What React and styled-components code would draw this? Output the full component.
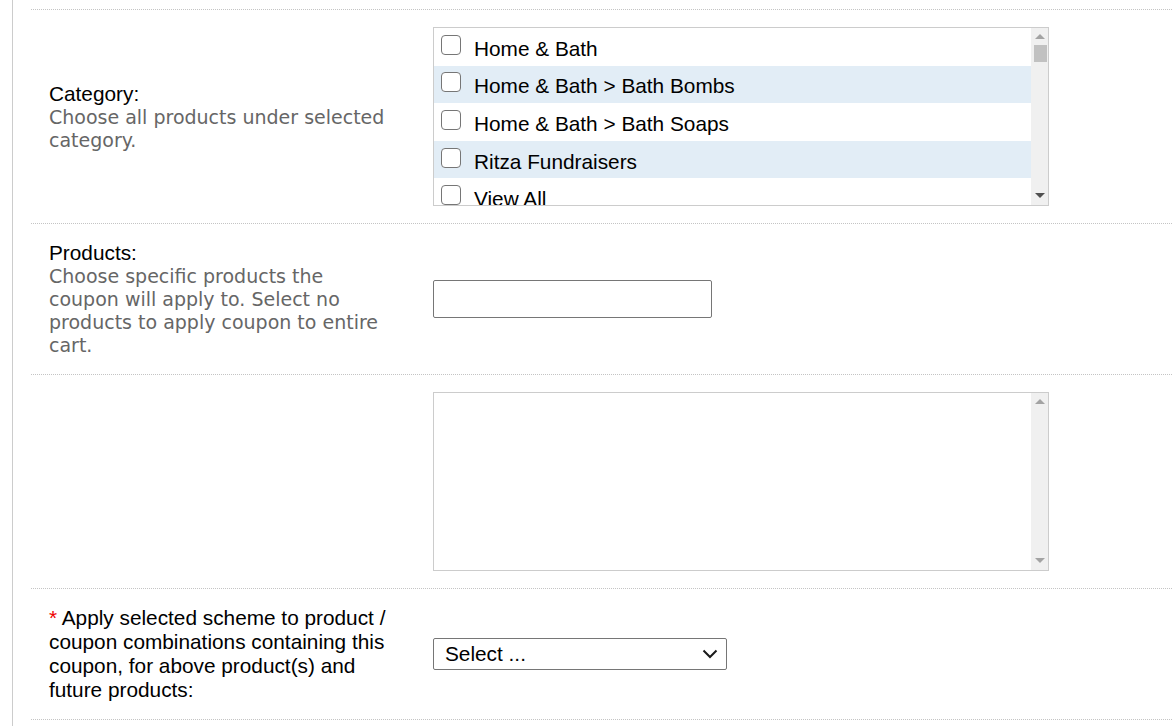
import React from "react";
import styled, { createGlobalStyle } from "styled-components";

const categories = [
  "Home & Bath",
  "Home & Bath > Bath Bombs",
  "Home & Bath > Bath Soaps",
  "Ritza Fundraisers",
  "View All",
];

const GlobalStyle = createGlobalStyle`
  html, body {
    margin: 0;
    padding: 0;
    background: #fff;
  }
  body {
    font-family: "Liberation Sans", Arial, sans-serif;
    color: #000;
  }
`;

const App = () => {
  return (
    <>
      <GlobalStyle />
      <Page>
        <TopGap />
        <Row>
          <LabelCell>
            <Label>Category:</Label>
            <Hint>Choose all products under selected category.</Hint>
          </LabelCell>
          <ValueCell>
            <ListBox>
              <Items>
                {categories.map((c, i) => (
                  <Item key={c} $alt={i % 2 === 1}>
                    <Check />
                    <ItemText>{c}</ItemText>
                  </Item>
                ))}
              </Items>
              <ScrollBar>
                <Arrow $up />
                <Thumb />
                <Track />
                <Arrow $dark />
              </ScrollBar>
            </ListBox>
          </ValueCell>
        </Row>

        <Row>
          <LabelCell>
            <Label>Products:</Label>
            <Hint>
              Choose specific products the coupon will apply to. Select no
              products to apply coupon to entire cart.
            </Hint>
          </LabelCell>
          <ValueCell>
            <TextInput type="text" />
          </ValueCell>
        </Row>

        <Row>
          <LabelCell />
          <ValueCell>
            <ListBox>
              <Items />
              <ScrollBar>
                <Arrow $up />
                <Track />
                <Arrow />
              </ScrollBar>
            </ListBox>
          </ValueCell>
        </Row>

        <Row>
          <LabelCell>
            <LongLabel>
              <Star>* </Star>Apply selected scheme to product / coupon
              combinations containing this coupon, for above product(s) and
              future products:
            </LongLabel>
          </LabelCell>
          <ValueCell>
            <Select>
              <span>Select ...</span>
              <svg width="16" height="10" viewBox="0 0 16 10">
                <polyline
                  points="1.5,1.5 8,8 14.5,1.5"
                  fill="none"
                  stroke="#1a1a1a"
                  strokeWidth="2"
                />
              </svg>
            </Select>
          </ValueCell>
        </Row>
        <Row $last />
      </Page>
    </>
  );
};

const Page = styled.div`
  margin-left: 12px;
  border-left: 1px solid #cccccc;
  padding-left: 18px;
  min-height: 726px;
  box-sizing: border-box;
`;

const TopGap = styled.div`
  height: 9px;
`;

const Row = styled.div`
  display: grid;
  grid-template-columns: 386px 1fr;
  align-items: center;
  border-top: 1px dotted #c4c4c4;
  padding: ${p => (p.$last ? "0" : "17px 0")};
  height: ${p => (p.$last ? "7px" : "auto")};
`;

const LabelCell = styled.div`
  padding: 0 18px;
`;

const ValueCell = styled.div`
  padding-left: 16px;
`;

const Label = styled.div`
  font-family: "Liberation Sans", Arial, sans-serif;
  font-size: 20.8px;
  line-height: 24px;
  color: #000;
`;

const Hint = styled.div`
  font-family: "DejaVu Sans", Verdana, sans-serif;
  font-size: 19px;
  line-height: 23px;
  color: #666666;
`;

const LongLabel = styled.div`
  font-family: "Liberation Sans", Arial, sans-serif;
  font-size: 20.8px;
  line-height: 24px;
  color: #000;
`;

const Star = styled.span`
  color: #ee0000;
`;

const ListBox = styled.div`
  width: 616px;
  height: 179px;
  box-sizing: border-box;
  border: 1px solid #cccccc;
  display: flex;
  background: #fff;
  overflow: hidden;
`;

const Items = styled.div`
  flex: 1;
  overflow: hidden;
`;

const Item = styled.div`
  height: 37.6px;
  display: flex;
  align-items: center;
  padding-left: 7px;
  background: ${p => (p.$alt ? "#e2edf6" : "#fff")};
`;

const Check = styled.span`
  width: 20px;
  height: 20px;
  box-sizing: border-box;
  border: 1.5px solid #767676;
  border-radius: 4px;
  background: #fff;
  margin-top: -4px;
  flex: none;
`;

const ItemText = styled.span`
  margin-left: 13px;
  margin-top: 4px;
  font-size: 20.8px;
  color: #000;
`;

const ScrollBar = styled.div`
  width: 17px;
  background: #f0f0f0;
  display: flex;
  flex-direction: column;
  align-items: center;
`;

const Arrow = styled.div`
  width: 0;
  height: 0;
  border-left: 5px solid transparent;
  border-right: 5px solid transparent;
  ${p =>
    p.$up
      ? `border-bottom: 5px solid #a3a3a3; margin-top: 6px;`
      : `border-top: 5px solid ${p.$dark ? "#505050" : "#a3a3a3"}; margin-bottom: 7px;`}
`;

const Thumb = styled.div`
  width: 13px;
  height: 17px;
  margin-top: 6px;
  margin-left: 1px;
  background: #c1c1c1;
`;

const Track = styled.div`
  flex: 1;
`;

const TextInput = styled.input`
  display: block;
  width: 279px;
  height: 38px;
  box-sizing: border-box;
  border: 1px solid #767676;
  border-radius: 2px;
  margin: 0;
  padding: 0 6px;
  font-size: 20px;
  font-family: "Liberation Sans", Arial, sans-serif;
  outline: none;
`;

const Select = styled.div`
  width: 294px;
  height: 32px;
  box-sizing: border-box;
  border: 1px solid #767676;
  border-radius: 2px;
  display: flex;
  align-items: center;
  justify-content: space-between;
  padding: 0 8px 0 11px;
  font-size: 20.8px;
  color: #000;
  background: #fff;
`;

export default App;
